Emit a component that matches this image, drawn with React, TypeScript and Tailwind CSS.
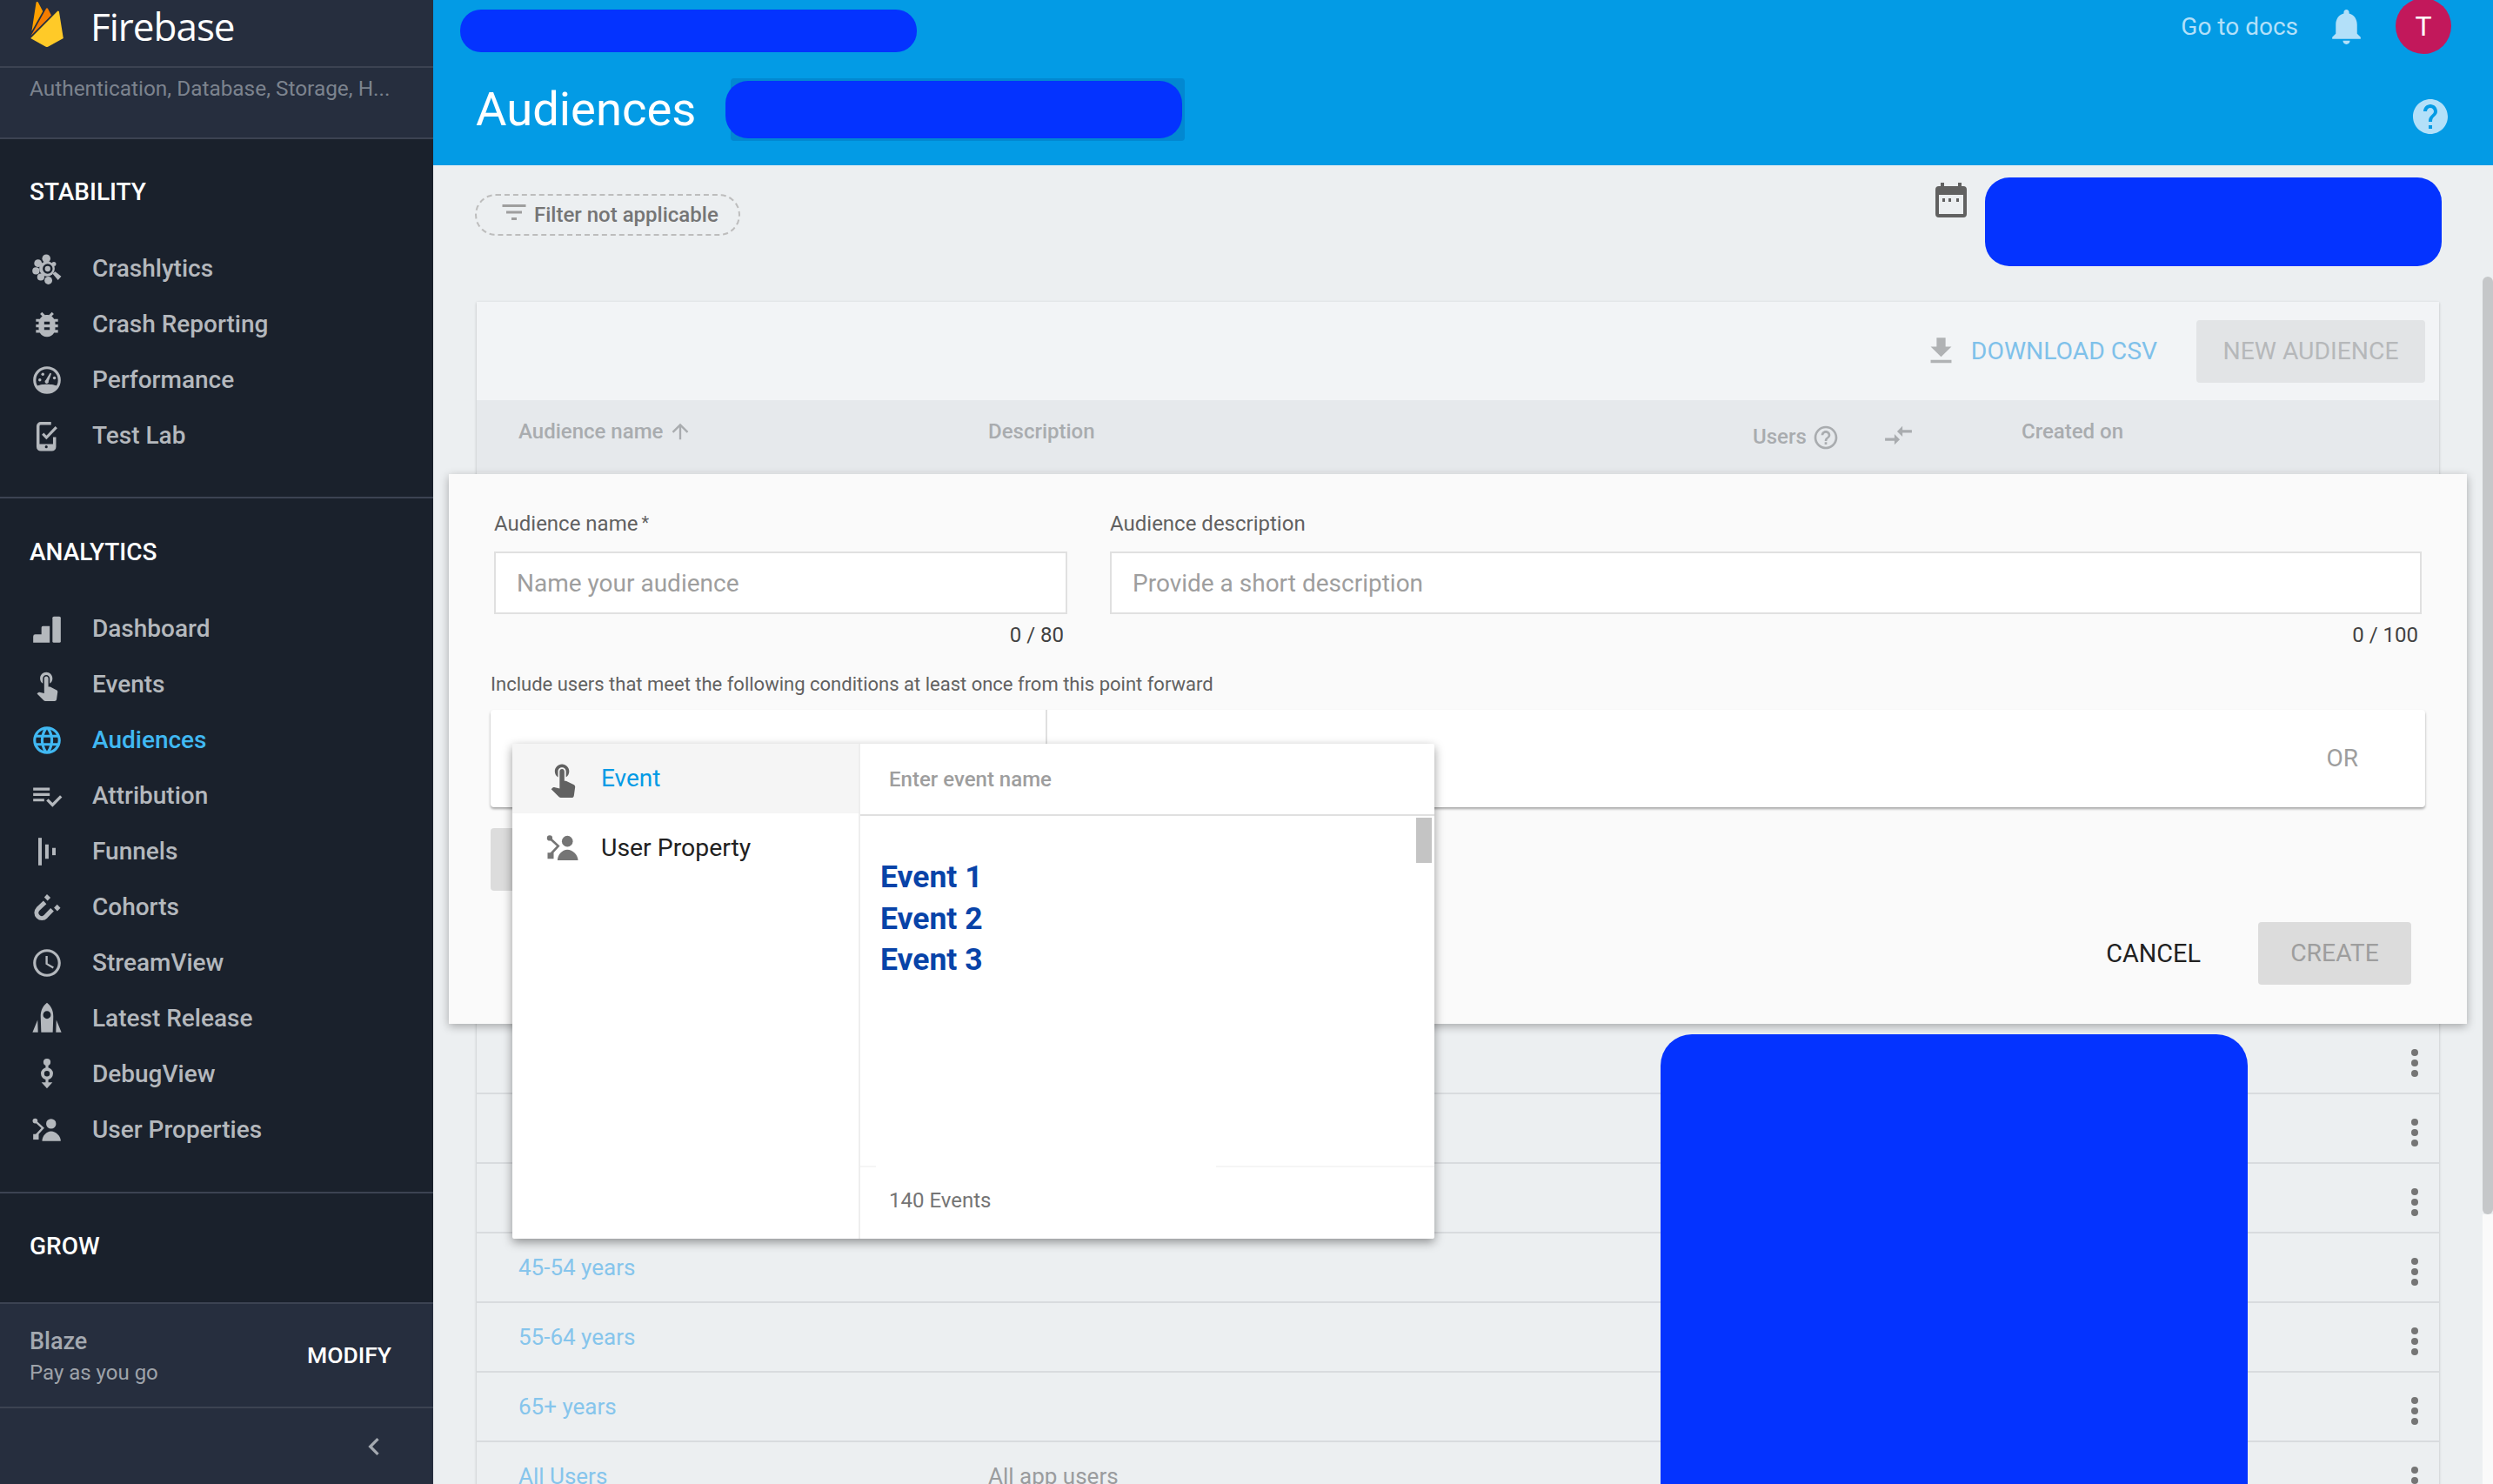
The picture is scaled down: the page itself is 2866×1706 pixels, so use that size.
import React from "react";

const MI = {
  bug: "M20 8h-2.81c-.45-.78-1.07-1.45-1.82-1.96L17 4.41 15.59 3l-2.17 2.17C12.96 5.06 12.49 5 12 5c-.49 0-.96.06-1.41.17L8.41 3 7 4.41l1.62 1.63C7.88 6.55 7.26 7.22 6.81 8H4v2h2.09c-.05.33-.09.66-.09 1v1H4v2h2v1c0 .34.04.67.09 1H4v2h2.81c1.04 1.79 2.97 3 5.19 3s4.15-1.21 5.19-3H20v-2h-2.09c.05-.33.09-.66.09-1v-1h2v-2h-2v-1c0-.34-.04-.67-.09-1H20V8zm-6 8h-4v-2h4v2zm0-4h-4v-2h4v2z",
  touch: "M9 11.24V7.5C9 6.12 10.12 5 11.5 5S14 6.12 14 7.5v3.74c1.21-.81 2-2.18 2-3.74C16 5.01 13.99 3 11.5 3S7 5.01 7 7.5c0 1.56.79 2.93 2 3.74zm9.84 4.63l-4.54-2.26c-.17-.07-.35-.11-.54-.11H13v-6c0-.83-.67-1.5-1.5-1.5S10 6.67 10 7.5v10.74l-3.43-.72c-.08-.01-.15-.03-.24-.03-.31 0-.59.13-.79.33l-.79.8 4.94 4.94c.27.27.65.44 1.06.44h6.79c.75 0 1.33-.55 1.44-1.28l.75-5.27c.01-.07.02-.14.02-.2 0-.62-.38-1.16-.91-1.38z",
  globe: "M11.99 2C6.47 2 2 6.48 2 12s4.47 10 9.99 10C17.52 22 22 17.52 22 12S17.52 2 11.99 2zm6.93 6h-2.95c-.32-1.25-.78-2.45-1.38-3.56 1.84.63 3.37 1.91 4.33 3.56zM12 4.04c.83 1.2 1.48 2.53 1.91 3.96h-3.82c.43-1.43 1.08-2.76 1.91-3.96zM4.26 14C4.1 13.36 4 12.69 4 12s.1-1.36.26-2h3.38c-.08.66-.14 1.32-.14 2 0 .68.06 1.34.14 2H4.26zm.82 2h2.95c.32 1.25.78 2.45 1.38 3.56-1.84-.63-3.37-1.9-4.33-3.56zm2.95-8H5.08c.96-1.66 2.49-2.93 4.33-3.56C8.81 5.55 8.35 6.75 8.03 8zM12 19.96c-.83-1.2-1.48-2.53-1.91-3.96h3.82c-.43 1.43-1.08 2.76-1.91 3.96zM14.34 14H9.66c-.09-.66-.16-1.32-.16-2 0-.68.07-1.35.16-2h4.68c.09.65.16 1.32.16 2 0 .68-.07 1.34-.16 2zm.25 5.56c.6-1.11 1.06-2.31 1.38-3.56h2.95c-.96 1.65-2.49 2.93-4.33 3.56zM16.36 14c.08-.66.14-1.32.14-2 0-.68-.06-1.34-.14-2h3.38c.16.64.26 1.31.26 2s-.1 1.36-.26 2h-3.38z",
  playlist: "M14 10H2v2h12v-2zm0-4H2v2h12V6zM2 16h8v-2H2v2zm19.5-4.5L23 13l-6.99 7-4.51-4.5L13 14l3.01 3 5.49-5.5z",
  clock: "M11.99 2C6.47 2 2 6.48 2 12s4.47 10 9.99 10C17.52 22 22 17.52 22 12S17.52 2 11.99 2zM12 20c-4.42 0-8-3.58-8-8s3.58-8 8-8 8 3.58 8 8-3.58 8-8 8zm.5-13H11v6l5.25 3.15.75-1.23-4.5-2.67z",
  bell: "M12 22c1.1 0 2-.9 2-2h-4c0 1.1.89 2 2 2zm6-6v-5c0-3.07-1.64-5.64-4.5-6.32V4c0-.83-.67-1.5-1.5-1.5s-1.5.67-1.5 1.5v.68C7.63 5.36 6 7.92 6 11v5l-2 2v1h16v-1l-2-2z",
  help: "M12 2C6.48 2 2 6.48 2 12s4.48 10 10 10 10-4.48 10-10S17.52 2 12 2zm1 17h-2v-2h2v2zm2.07-7.75l-.9.92C13.45 12.9 13 13.5 13 15h-2v-.5c0-1.1.45-2.1 1.17-2.83l1.24-1.26c.37-.36.59-.86.59-1.41 0-1.1-.9-2-2-2s-2 .9-2 2H8c0-2.21 1.79-4 4-4s4 1.79 4 4c0 .88-.36 1.68-.93 2.25z",
  helpOutline: "M11 18h2v-2h-2v2zm1-16C6.48 2 2 6.48 2 12s4.48 10 10 10 10-4.48 10-10S17.52 2 12 2zm0 18c-4.41 0-8-3.59-8-8s3.59-8 8-8 8 3.59 8 8-3.59 8-8 8zm0-14c-2.21 0-4 1.79-4 4h2c0-1.1.9-2 2-2s2 .9 2 2c0 2-3 1.75-3 5h2c0-2.25 3-2.5 3-5 0-2.21-1.79-4-4-4z",
  filter: "M10 18h4v-2h-4v2zM3 6v2h18V6H3zm3 7h12v-2H6v2z",
  download: "M19 9h-4V3H9v6H5l7 7 7-7zM5 18v2h14v-2H5z",
  arrowUp: "M4 12l1.41 1.41L11 7.83V20h2V7.83l5.58 5.59L20 12l-8-8-8 8z",
  compare: "M9.01 14H2v2h7.01v3L13 15l-3.99-4v3zm5.98-1v-3H22V8h-7.01V5L11 9l3.99 4z",
  chevron: "M15.41 7.41L14 6l-6 6 6 6 1.41-1.41L10.83 12z",
};

function Mat({ d, className }: { d: string; className: string }) {
  return (
    <svg viewBox="0 0 24 24" fill="currentColor" className={className}>
      <path d={d} />
    </svg>
  );
}

function NavIcon({ name }: { name: string }) {
  const cls = "w-[38px] h-[38px] shrink-0";
  switch (name) {
    case "crash":
      return (
        <svg viewBox="0 0 24 24" fill="currentColor" className={cls}>
          <circle cx="11.5" cy="4.5" r="3" />
          <circle cx="5.5" cy="8" r="2.8" />
          <circle cx="4" cy="13.5" r="2.6" />
          <circle cx="7.5" cy="18" r="2.6" />
          <circle cx="13" cy="20.5" r="2.8" />
          <path d="M16 15.5l2-1.5 4.4 3.6-2.4 2.6z" />
          <circle cx="17" cy="8.5" r="1.6" />
          <circle cx="12" cy="12" r="5.6" />
          <circle cx="12.5" cy="12" r="3.6" fill="#1a212c" />
          <circle cx="12.5" cy="12" r="2" />
        </svg>
      );
    case "bug":
      return <Mat d={MI.bug} className={cls} />;
    case "perf":
      return (
        <svg viewBox="0 0 24 24" fill="currentColor" className={cls}>
          <circle cx="12" cy="12" r="9" fill="none" stroke="currentColor" strokeWidth="2" />
          <path d="M4.5 16.5C7 14.6 17 14.6 19.5 16.5A9 9 0 0 1 4.5 16.5z" />
          <path d="M14.2 6.8l1 .5-2 5.4a1.4 1.4 0 1 1-2-.9z" />
          <circle cx="6.8" cy="11.8" r="1.1" />
          <circle cx="9" cy="7.8" r="1.1" />
          <circle cx="17.4" cy="10.4" r="1.1" />
        </svg>
      );
    case "lab":
      return (
        <svg viewBox="0 0 24 24" className={cls}>
          <path d="M15 3H7.5A2 2 0 0 0 5.5 5v15a2 2 0 0 0 2 2h8a2 2 0 0 0 2-2V13" fill="none" stroke="currentColor" strokeWidth="2.2" />
          <path d="M5.5 18h12v2.5a1.5 1.5 0 0 1-1.5 1.5H7a1.5 1.5 0 0 1-1.5-1.5z" fill="currentColor" />
          <circle cx="11.5" cy="20" r="1" fill="#1a212c" />
          <path d="M9 10.5l2.6 2.8 7.2-7.5" fill="none" stroke="currentColor" strokeWidth="2" />
        </svg>
      );
    case "dash":
      return (
        <svg viewBox="0 0 24 24" fill="currentColor" className={cls}>
          <path d="M2 22v-4.5A1.5 1.5 0 0 1 3.5 16H8v-5a1 1 0 0 1 1-1h5v12z" />
          <rect x="16" y="3" width="6" height="19" rx="1" />
        </svg>
      );
    case "touch":
      return <Mat d={MI.touch} className={cls} />;
    case "globe":
      return <Mat d={MI.globe} className={cls} />;
    case "playlist":
      return <Mat d={MI.playlist} className={cls} />;
    case "funnel":
      return (
        <svg viewBox="0 0 24 24" fill="currentColor" className={cls}>
          <rect x="5.7" y="2" width="2.5" height="20" />
          <rect x="10.7" y="6.8" width="2.5" height="10.4" />
          <rect x="15.8" y="9.3" width="2.5" height="5.3" />
        </svg>
      );
    case "magnet":
      return (
        <svg viewBox="0 0 24 24" fill="currentColor" className={cls}>
          <path d="M10.5 8.5L5.5 13.2a3.9 3.9 0 0 0 5.6 5.5l4.7-5" fill="none" stroke="currentColor" strokeWidth="3.2" />
          <path d="M12 2.6l2.6 2.4-2.2 2.2L10 4.8zM19.4 10l2.4 2.5-2.3 2.3-2.4-2.5z" />
        </svg>
      );
    case "clock":
      return <Mat d={MI.clock} className={cls} />;
    case "rocket":
      return (
        <svg viewBox="0 0 24 24" fill="currentColor" className={cls}>
          <path fillRule="evenodd" d="M12 .5C8.4 3.2 7.4 7 7.4 10.5L7.8 22h8.4l.4-11.5C16.6 7 15.6 3.2 12 .5zM12 6.5a2.8 2.8 0 1 1 0 5.6 2.8 2.8 0 0 1 0-5.6z" />
          <path d="M5.2 13L1.5 22h4zM18.8 13l3.7 9h-4z" />
        </svg>
      );
    case "debug":
      return (
        <svg viewBox="0 0 24 24" fill="currentColor" className={cls}>
          <circle cx="12" cy="3.2" r="2.6" />
          <rect x="11" y="4" width="2" height="5" />
          <circle cx="12" cy="11.5" r="3.2" fill="none" stroke="currentColor" strokeWidth="2.4" />
          <rect x="11" y="15" width="2" height="4" />
          <path d="M8 17.8h8l-4 4.4z" />
        </svg>
      );
    default:
      return <PersonBranch className={cls} />;
  }
}

function PersonBranch({ className }: { className: string }) {
  return (
    <svg viewBox="0 0 24 24" fill="currentColor" className={className}>
      <circle cx="15" cy="7.5" r="3.6" />
      <path d="M8.5 20c0-3.6 3.2-7 6.5-7s7 3.4 7 7z" />
      <circle cx="3.4" cy="5.4" r="1.8" />
      <rect x="2" y="15" width="4" height="4" />
      <path d="M3.4 5.4L9 10.6 4 16" fill="none" stroke="currentColor" strokeWidth="1.5" />
    </svg>
  );
}

function FirebaseLogo() {
  return (
    <svg viewBox="3.3 0 17.4 24" className="w-[38px] h-[52px] shrink-0">
      <path fill="#FFA000" d="M3.89 15.672L6.255.461A.542.542 0 0 1 7.27.288l2.543 4.771z" />
      <path fill="#F57C00" d="M14.3 7.147l-1.82-3.482a.542.542 0 0 0-.96 0L3.53 17.984z" />
      <path fill="#FFCA28" d="M20.684 19.364l-2.25-14a.54.54 0 0 0-.919-.295L3.316 19.365l7.856 4.427a1.621 1.621 0 0 0 1.588 0z" />
    </svg>
  );
}

function NavSection({ title, items, pt, pb }: { title: string; items: { label: string; icon: string; active?: boolean }[]; pt: string; pb: string }) {
  return (
    <div className={`border-b-2 border-[#3c4352] ${pt} ${pb}`}>
      <div className="h-[64px] flex items-center pl-[34px] text-[28px] font-medium text-white">{title}</div>
      <div className="mt-[24px]">
        {items.map((item) => (
          <div
            key={item.label}
            className={`h-[64px] pl-[35px] flex items-center gap-[33px] text-[28px] font-medium ${item.active ? "text-[#40b8f2]" : "text-[#b4b8bd]"}`}
          >
            <NavIcon name={item.icon} />
            <span>{item.label}</span>
          </div>
        ))}
      </div>
    </div>
  );
}

function Sidebar() {
  return (
    <aside className="w-[498px] shrink-0 flex flex-col bg-[#1a212c]">
      <div className="h-[160px] bg-[#262e3e] border-b-2 border-[#3c4352]">
        <div className="h-[78px] pl-[35px] flex items-start gap-[31px] border-b-2 border-[#3c4352] pt-[2px]">
          <FirebaseLogo />
          <span className="text-[44px] leading-[56px] text-white font-[family-name:'Open_Sans',sans-serif] tracking-[-1px]">Firebase</span>
        </div>
        <div className="pl-[34px] pt-[6px] text-[24.4px] text-[#7c838e] whitespace-nowrap">Authentication, Database, Storage, H...</div>
      </div>
      <NavSection
        title="STABILITY"
        pt="pt-[29px]"
        pb="pb-[38px]"
        items={[
          { label: "Crashlytics", icon: "crash" },
          { label: "Crash Reporting", icon: "bug" },
          { label: "Performance", icon: "perf" },
          { label: "Test Lab", icon: "lab" },
        ]}
      />
      <NavSection
        title="ANALYTICS"
        pt="pt-[30px]"
        pb="pb-[39px]"
        items={[
          { label: "Dashboard", icon: "dash" },
          { label: "Events", icon: "touch" },
          { label: "Audiences", icon: "globe", active: true },
          { label: "Attribution", icon: "playlist" },
          { label: "Funnels", icon: "funnel" },
          { label: "Cohorts", icon: "magnet" },
          { label: "StreamView", icon: "clock" },
          { label: "Latest Release", icon: "rocket" },
          { label: "DebugView", icon: "debug" },
          { label: "User Properties", icon: "person" },
        ]}
      />
      <div className="border-b-2 border-[#3c4352] pt-[29px] pb-[32px]">
        <div className="h-[64px] flex items-center pl-[34px] text-[28px] font-medium text-white">GROW</div>
      </div>
      <div className="flex-1 bg-[#262e3e] flex flex-col">
        <div className="h-[120px] shrink-0 border-b-2 border-[#3c4352] flex items-center justify-between pl-[34px] pr-[48px]">
          <div className="flex flex-col pt-[4px]">
            <span className="text-[27px] font-medium text-[#a4a9b0] leading-[36px]">Blaze</span>
            <span className="text-[24px] text-[#9ea3aa] leading-[36px]">Pay as you go</span>
          </div>
          <span className="text-[26.5px] font-medium text-white">MODIFY</span>
        </div>
        <div className="flex-1 flex items-center justify-end pr-[48px]">
          <Mat d={MI.chevron} className="w-[40px] h-[40px] text-[#a4a9b0]" />
        </div>
      </div>
    </aside>
  );
}

function TopBar() {
  return (
    <header className="h-[190px] shrink-0 bg-[#039be5] flex flex-col">
      <div className="h-[60px] flex items-start justify-between pl-[31px] pr-[48px]">
        <div className="mt-[11px] w-[525px] h-[49px] rounded-[24px] bg-[#0433ff]" />
        <div className="h-[60px] flex items-center">
          <span className="pt-[2px] text-[28px] text-[#b3e0f9]">Go to docs</span>
          <Mat d={MI.bell} className="ml-[31px] w-[49px] h-[49px] text-[#b3e0f9]" />
          <div className="ml-[32px] w-[64px] h-[64px] rounded-full bg-[#c2185b] flex items-center justify-center text-[32px] text-white">T</div>
        </div>
      </div>
      <div className="mt-[30px] flex items-start justify-between pl-[49px] pr-[48px]">
        <div className="flex items-center h-[72px]">
          <span className="text-[54.4px] leading-none text-white">Audiences</span>
          <div className="relative ml-[40px] w-[522px] h-[72px] bg-[#0288d1] rounded-[4px]">
            <div className="absolute left-[-6px] top-[3px] w-[525px] h-[66px] rounded-[26px] bg-[#0433ff]" />
          </div>
        </div>
        <Mat d={MI.help} className="mt-[20px] w-[48px] h-[48px] text-[#b3e0f9]" />
      </div>
    </header>
  );
}

const RowNames = ["18-24 years", "25-34 years", "35-44 years", "45-54 years", "55-64 years", "65+ years", "All Users"];

function AudienceTable() {
  return (
    <div className="mt-[41px] ml-[50px] mr-[50px] shadow-[0_1px_3px_rgba(0,0,0,0.22)] bg-[#eceff1]">
      <div className="h-[113px] bg-[#f2f4f6] flex items-center justify-end pr-[16px]">
        <Mat d={MI.download} className="w-[41px] h-[41px] text-[#b0b2b4]" />
        <span className="ml-[14px] pt-[2px] text-[28.3px] text-[#7fc1ea]">DOWNLOAD CSV</span>
        <div className="ml-[45px] pt-[2px] w-[263px] h-[72px] rounded-[4px] bg-[#e2e4e6] flex items-center justify-center text-[28.3px] text-[#b6b8ba]">NEW AUDIENCE</div>
      </div>
      <div className="h-[83px] bg-[#e6e9ec] flex pl-[48px] text-[24px] font-medium text-[#a9acaf]">
        <div className="w-[540px] flex items-center h-[72px]">
          <span>Audience name</span>
          <Mat d={MI.arrowUp} className="ml-[6px] w-[28px] h-[28px]" />
        </div>
        <div className="w-[879px] flex items-center h-[72px]">Description</div>
        <div className="w-[309px] flex items-center h-[72px] mt-[6px]">
          <span>Users</span>
          <Mat d={MI.helpOutline} className="ml-[6px] w-[32px] h-[32px] mt-[2px]" />
          <Mat d={MI.compare} className="ml-[49px] w-[37px] h-[37px] -mt-[4px]" />
        </div>
        <div className="flex items-center h-[72px]">Created on</div>
      </div>
      {/* rows above this are all hidden by the dialog */}
      <div className="h-[635px]" />
      {RowNames.map((name) => (
        <div key={name} className="h-[80px] border-b-2 border-[#d8dbde] flex items-center pl-[48px] pr-[24px] text-[26px]">
          <span className="w-[540px] text-[#86c5ec]">{name}</span>
          <span className="flex-1 text-[#9a9c9e]">{name === "All Users" ? "All app users" : ""}</span>
          <div className="flex flex-col gap-[4px] mt-[10px]">
            <div className="w-[8px] h-[8px] rounded-full bg-[#757575]" />
            <div className="w-[8px] h-[8px] rounded-full bg-[#757575]" />
            <div className="w-[8px] h-[8px] rounded-full bg-[#757575]" />
          </div>
        </div>
      ))}
    </div>
  );
}

function EventPopover() {
  return (
    <div className="absolute left-[73px] top-[310px] w-[1060px] h-[569px] bg-white flex rounded-[2px] shadow-[0_4px_12px_rgba(0,0,0,0.4)]">
      <div className="w-[400px] shrink-0 border-r-2 border-[#eeeeee]">
        <div className="h-[80px] bg-[#f5f5f5] flex items-center pl-[36px] gap-[22px] text-[28px] text-[#039be5]">
          <Mat d={MI.touch} className="w-[44px] h-[44px] text-[#616161]" />
          <span>Event</span>
        </div>
        <div className="h-[80px] flex items-center pl-[37px] gap-[23px] text-[28.4px] text-[#212121]">
          <PersonBranch className="w-[42px] h-[42px] text-[#757575]" />
          <span>User Property</span>
        </div>
      </div>
      <div className="flex-1 flex flex-col relative">
        <div className="h-[83px] shrink-0 border-b-2 border-[#e0e0e0] flex items-center pl-[33px] text-[24px] font-medium text-[#9e9e9e]">Enter event name</div>
        <div className="absolute right-[3px] top-[85px] w-[18px] h-[52px] bg-[#c4c4c4]" />
        <div className="h-[402px] shrink-0 pt-[47px] pl-[23px] text-[35.5px] leading-[47.5px] font-bold text-[#0843a8]">
          <div>Event 1</div>
          <div>Event 2</div>
          <div>Event 3</div>
        </div>
        <div className="flex-1 relative flex items-center pl-[33px] pb-[4px] text-[24px] text-[#757575]">
          <div className="absolute top-0 left-0 w-[18px] h-[2px] bg-[#f5f5f5]" />
          <div className="absolute top-0 right-0 w-[251px] h-[2px] bg-[#f5f5f5]" />
          140 Events
        </div>
      </div>
    </div>
  );
}

function CreateDialog() {
  return (
    <div className="absolute left-[516px] top-[545px] w-[2320px] h-[632px] bg-[#fafafa] shadow-[0_3px_10px_rgba(0,0,0,0.3)] px-[48px]">
      <div className="flex gap-[49px] pt-[41px] px-[4px]">
        <div className="w-[659px] shrink-0">
          <div className="h-[32px] flex items-center text-[24px] text-[#616161]">Audience name<span className="ml-[4px] self-start text-[20px]">*</span></div>
          <div className="mt-[16px] h-[72px] pt-[2px] bg-white border-2 border-[#e0e0e0] flex items-center pl-[24px] text-[28px] text-[#9e9e9e]">Name your audience</div>
          <div className="mt-[8px] h-[32px] flex items-center justify-end pr-[4px] text-[24px] text-[#424242]">0 / 80</div>
        </div>
        <div className="flex-1">
          <div className="h-[32px] flex items-center text-[24px] text-[#616161]">Audience description</div>
          <div className="mt-[16px] h-[72px] pt-[2px] bg-white border-2 border-[#e0e0e0] flex items-center pl-[24px] text-[28px] text-[#9e9e9e]">Provide a short description</div>
          <div className="mt-[8px] h-[32px] flex items-center justify-end pr-[4px] text-[24px] text-[#424242]">0 / 100</div>
        </div>
      </div>
      <div className="mt-[24px] h-[32px] flex items-center text-[22px] text-[#616161]">Include users that meet the following conditions at least once from this point forward</div>
      <div className="mt-[14px] h-[112px] bg-white rounded-[4px] flex shadow-[0_2px_3px_rgba(0,0,0,0.35)]">
        <div className="w-[640px] border-r-2 border-[#e0e0e0]" />
        <div className="flex-1 flex items-center justify-end pr-[77px] text-[28px] text-[#9e9e9e]">OR</div>
      </div>
      <div className="mt-[24px] w-[100px] h-[72px] rounded-[4px] bg-[#dcdcdc]" />
      <div className="mt-[36px] flex items-center justify-end pr-[16px]">
        <span className="pt-[1px] text-[28.8px] text-[#212121]">CANCEL</span>
        <div className="ml-[66px] pt-[1px] w-[176px] h-[72px] rounded-[4px] bg-[#dcdcdc] flex items-center justify-center text-[28.3px] text-[#9e9e9e]">CREATE</div>
      </div>
      <EventPopover />
    </div>
  );
}

export default function App() {
  return (
    <div className="relative w-[2866px] h-[1706px] overflow-hidden flex bg-[#eceff1] font-[family-name:Roboto,sans-serif]">
      <Sidebar />
      <main className="flex-1 flex flex-col min-w-0">
        <TopBar />
        <div className="flex-1 flex min-h-0">
          <div className="flex-1 min-w-0">
            <div className="flex items-start justify-between pl-[48px] pr-[47px] pt-[14px]">
              <div className="mt-[19px] w-[305px] h-[48px] rounded-full border-2 border-dashed border-[#bdbdbd] flex items-center pl-[25px] gap-[5px] text-[24px] font-medium text-[#757575]">
                <Mat d={MI.filter} className="w-[36px] h-[36px] text-[#9e9e9e] -mt-[6px]" />
                <span>Filter not applicable</span>
              </div>
              <div className="flex items-start gap-[21px]">
                <svg viewBox="0 0 36 40" className="mt-[6px] w-[36px] h-[40px] text-[#616161]" fill="currentColor">
                  <path fillRule="evenodd" d="M6 0h4v4h16V0h4v4h2a4 4 0 0 1 4 4v28a4 4 0 0 1-4 4H4a4 4 0 0 1-4-4V8a4 4 0 0 1 4-4h2zM4 14v22h28V14z" />
                  <path d="M8 18h3v4H8zM15 18h3v4h-3zM24 18h3v4h-3z" />
                </svg>
                <div className="w-[525px] h-[102px] rounded-[28px] bg-[#0433ff]" />
              </div>
            </div>
            <AudienceTable />
          </div>
          <div className="w-[12px] shrink-0 flex flex-col">
            <div className="h-[128px] shrink-0" />
            <div className="h-[1078px] shrink-0 rounded-full bg-[#c5c7c9]" />
            <div className="flex-1 bg-[#fafafa]" />
          </div>
        </div>
      </main>
      <CreateDialog />
      <div className="absolute left-[1909px] top-[1189px] w-[675px] h-[560px] rounded-[36px] bg-[#0433ff]" />
    </div>
  );
}
